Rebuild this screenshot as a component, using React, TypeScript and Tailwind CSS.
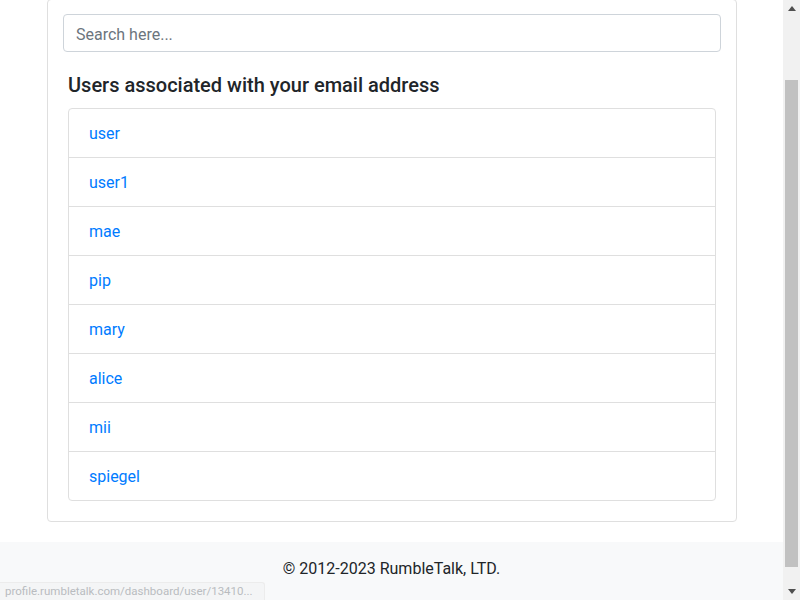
import React from "react";

const users = ["user", "user1", "mae", "pip", "mary", "alice", "mii", "spiegel"];

export default function App() {
  return (
    <div
      className="relative flex h-[600px] w-[800px] overflow-hidden bg-white text-[#212529]"
      style={{ fontFamily: '"Segoe UI", Roboto, "Liberation Sans", sans-serif' }}
    >
      <div className="flex w-[783px] flex-col">
        <div className="pb-[20px] pl-[47px] pr-[46px]">
          <div className="-mt-px rounded-[4px] border border-[#dfdfdf] pb-[20px] pt-[14px]">
            <div className="px-[15px]">
              <div className="flex h-[38px] items-center rounded-[4px] border border-[#ced4da] px-[12px] pt-[3px] text-[16px] text-[#6c757d]">
                Search here...
              </div>
            </div>
            <div className="px-[20px]">
              <h5 className="mb-[11px] mt-[21px] text-[20px] font-medium leading-[24px] text-[#212529]">
                Users associated with your email address
              </h5>
              <ul className="flex flex-col rounded-[4px] border border-[#dfdfdf]">
                {users.map((u, i) => (
                  <li
                    key={u}
                    className={`px-[20px] pb-[11px] pt-[13px] text-[16px] leading-[24px] text-[#007bff] ${
                      i > 0 ? "border-t border-[#dfdfdf]" : ""
                    }`}
                  >
                    {u}
                  </li>
                ))}
              </ul>
            </div>
          </div>
        </div>
        <div className="flex-1 bg-[#f8f9fa] pt-[15px] text-center text-[16px] leading-[24px] text-[#212529]">
          © 2012-2023 RumbleTalk, LTD.
        </div>
      </div>
      <div className="flex w-[17px] flex-col bg-[#f1f1f1]">
        <div className="flex h-[17px] items-center justify-center">
          <svg width="8" height="5" viewBox="0 0 8 5">
            <polygon points="0,5 8,5 4,0" fill="#505050" />
          </svg>
        </div>
        <div className="mt-[63px] flex h-[487px] justify-center">
          <div className="w-[13px] bg-[#c1c1c1]" />
        </div>
        <div className="flex-1" />
        <div className="flex h-[17px] items-center justify-center">
          <svg width="8" height="5" viewBox="0 0 8 5">
            <polygon points="0,0 8,0 4,5" fill="#505050" />
          </svg>
        </div>
      </div>
      <div className="absolute bottom-0 left-0 flex h-[18px] w-[265px] items-center rounded-tr-[3px] border-r border-t border-[#ececec] bg-[#f4f5f6] pl-[5px] text-[11.5px] text-[#b9bcc0]">
        profile.rumbletalk.com/dashboard/user/13410...
      </div>
    </div>
  );
}
